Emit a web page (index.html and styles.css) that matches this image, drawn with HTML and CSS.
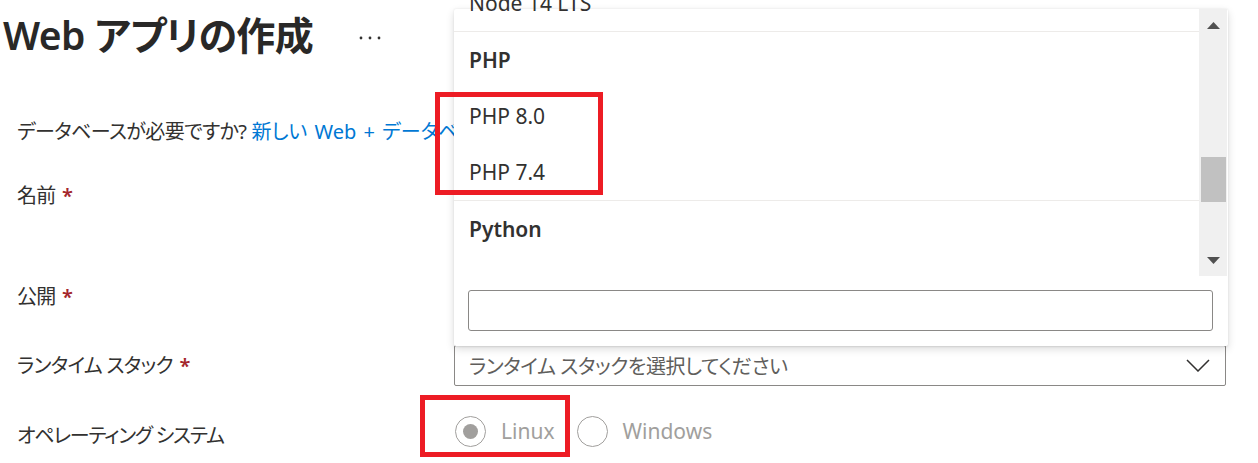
FILE: index.html
```html
<!DOCTYPE html>
<html lang="ja">
<head>
<meta charset="utf-8">
<title>Web アプリの作成</title>
<link rel="stylesheet" href="styles.css">
</head>
<body>
<div class="page">
  <header class="title-bar">
    <h1 class="title">Web アプリの作成</h1>
    <svg class="more" width="22" height="4" viewBox="0 0 22 4" aria-hidden="true">
      <circle cx="2" cy="2" r="1.4" fill="#323130"/>
      <circle cx="11" cy="2" r="1.4" fill="#323130"/>
      <circle cx="20" cy="2" r="1.4" fill="#323130"/>
    </svg>
  </header>

  <p class="db-note"><span class="note-q">データベースが必要ですか?</span> <a class="link" href="#">新しい Web + データベース エクスペリエンスを試す。</a></p>

  <div class="form">
    <div class="row row-name">
      <div class="label">名前 <span class="req">*</span></div>
      <div class="control"><div class="textbox"></div></div>
    </div>
    <div class="row row-publish">
      <div class="label">公開 <span class="req">*</span></div>
      <div class="control"></div>
    </div>
    <div class="row row-runtime">
      <div class="label">ランタイム スタック <span class="req">*</span></div>
      <div class="control">
        <div class="select">
          <span class="placeholder">ランタイム スタックを選択してください</span>
          <svg class="chevron" width="24" height="13" viewBox="0 0 24 13" aria-hidden="true">
            <polyline points="1,1 12,12 23,1" fill="none" stroke="#323130" stroke-width="1.5"/>
          </svg>
        </div>
      </div>
    </div>
    <div class="row row-os">
      <div class="label label-os">オペレーティング システム</div>
      <div class="control radios">
        <div class="radio">
          <span class="radio-circle checked"><span class="radio-dot"></span></span>
          <span class="radio-text">Linux</span>
        </div>
        <div class="radio">
          <span class="radio-circle"></span>
          <span class="radio-text">Windows</span>
        </div>
      </div>
    </div>
  </div>

  <div class="panel">
    <div class="panel-list">
      <div class="options">
        <div class="options-inner">
          <div class="option">Node 14 LTS</div>
          <div class="group">
            <div class="group-header">PHP</div>
            <div class="option">PHP 8.0</div>
            <div class="option">PHP 7.4</div>
          </div>
          <div class="group">
            <div class="group-header">Python</div>
            <div class="option">Python 3.9</div>
          </div>
        </div>
      </div>
      <div class="scrollbar">
        <div class="sb-btn">
          <svg width="13" height="7" viewBox="0 0 13 7" aria-hidden="true"><polygon points="0,7 6.5,0 13,7" fill="#505050"/></svg>
        </div>
        <div class="sb-track"><div class="sb-thumb"></div></div>
        <div class="sb-btn">
          <svg width="13" height="7" viewBox="0 0 13 7" aria-hidden="true"><polygon points="0,0 13,0 6.5,7" fill="#505050"/></svg>
        </div>
      </div>
    </div>
    <div class="panel-search">
      <div class="search-box"></div>
    </div>
  </div>

  <div class="mark mark-php"></div>
  <div class="mark mark-linux"></div>
</div>
</body>
</html>
```

FILE: styles.css
```css
* { box-sizing: border-box; }

html, body {
  margin: 0;
  padding: 0;
  background: #ffffff;
}

body {
  font-family: "Noto Sans", "Noto Sans CJK JP", sans-serif;
  font-feature-settings: "palt" 1;
  color: #323130;
  width: 1258px;
  height: 463px;
  overflow: hidden;
}

.page {
  position: relative;
  width: 1258px;
  height: 463px;
}

/* ---------- header ---------- */
.title-bar {
  display: flex;
  align-items: center;
  height: 70px;
  padding-left: 3px;
}

.title {
  margin: 0;
  font-size: 39px;
  font-weight: 600;
  line-height: 56px;
  color: #292827;
  letter-spacing: -0.6px;
}

.more {
  margin-left: 46px;
  margin-top: 6px;
}

/* ---------- note ---------- */
.db-note {
  margin: 42px 0 0 17px;
  width: 437px;
  height: 40px;
  line-height: 40px;
  font-size: 20px;
  white-space: nowrap;
  overflow: hidden;
}

.note-q {
  letter-spacing: -0.6px;
}

.link {
  color: #0078d4;
  text-decoration: none;
  word-spacing: 2px;
}

/* ---------- form ---------- */
.form {
  display: flex;
  flex-direction: column;
  padding-left: 17px;
}

.row {
  display: flex;
  align-items: center;
  height: 41px;
}

.row-name { margin-top: 23px; }
.row-publish { margin-top: 60px; }
.row-runtime { margin-top: 28px; }
.row-os { margin-top: 25px; height: 40px; }

.label {
  width: 437px;
  flex: none;
  font-size: 20px;
  line-height: 28px;
  letter-spacing: -0.7px;
}

.label-os {
  margin-top: 9px;
  letter-spacing: -1.2px;
}

.req {
  color: #a4262c;
  font-weight: 600;
  margin-left: 2px;
}

.control {
  width: 772px;
  height: 100%;
}

.textbox {
  height: 100%;
  border: 1px solid #8a8886;
  border-radius: 2px;
}

.select {
  display: flex;
  align-items: center;
  justify-content: space-between;
  height: 100%;
  border: 1px solid #8a8886;
  border-radius: 2px;
  padding: 0 15px 0 14px;
}

.placeholder {
  font-size: 20px;
  letter-spacing: -0.4px;
  color: #605e5c;
}

.radios {
  display: flex;
  align-items: center;
}

.radio {
  display: flex;
  align-items: center;
  margin-right: 21px;
}

.radio-circle {
  width: 31px;
  height: 31px;
  border: 1.5px solid #a19f9d;
  border-radius: 50%;
  display: flex;
  align-items: center;
  justify-content: center;
  margin-left: 1px;
}

.radio-dot {
  width: 15px;
  height: 15px;
  border-radius: 50%;
  background: #a19f9d;
}

.radio-text {
  margin-left: 15px;
  font-size: 21px;
  color: #a19f9d;
}

/* ---------- dropdown panel ---------- */
.panel {
  position: absolute;
  left: 454px;
  top: 9px;
  width: 774px;
  height: 337px;
  background: #ffffff;
  border-radius: 2px;
  box-shadow: 0 3px 8px rgba(0, 0, 0, 0.14), 0 0.6px 2px rgba(0, 0, 0, 0.10);
}

.panel-list {
  display: flex;
  height: 267px;
}

.options {
  flex: 1;
  clip-path: inset(-12px 0 0 0);
}

.options-inner {
  margin-top: -34px;
}

.option,
.group-header {
  height: 56px;
  line-height: 56px;
  padding-left: 15px;
  font-size: 21px;
  color: #323130;
  white-space: nowrap;
}

.group-header {
  font-weight: 600;
}

.group {
  border-top: 1px solid #edebe9;
}

.scrollbar {
  width: 28px;
  margin-right: 1px;
  background: #f0f0f0;
  display: flex;
  flex-direction: column;
}

.sb-btn {
  height: 32px;
  display: flex;
  align-items: center;
  justify-content: center;
}

.sb-track {
  flex: 1;
  padding: 116px 1px 0 2px;
}

.sb-thumb {
  height: 45px;
  background: #c1c1c1;
}

.panel-search {
  padding: 14px 15px 15px 14px;
}

.search-box {
  height: 41px;
  border: 1px solid #8a8886;
  border-radius: 3px;
}

/* ---------- annotation marks ---------- */
.mark {
  position: absolute;
  border: 5px solid #ed1c24;
}

.mark-php {
  left: 435px;
  top: 92px;
  width: 168px;
  height: 103px;
}

.mark-linux {
  left: 420px;
  top: 395px;
  width: 150px;
  height: 62px;
}
```
